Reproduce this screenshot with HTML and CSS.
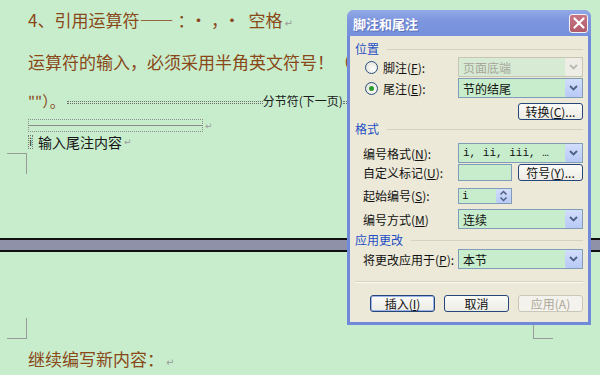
FILE: index.html
```html
<!DOCTYPE html>
<html lang="zh-CN">
<head>
  <meta charset="UTF-8" />
  <title>脚注和尾注</title>
  <link rel="stylesheet" href="styles.css">
</head>
<body>
  <div class="doc">
    <div class="sheet">
      <p class="line first">4、引用运算符——<span class="ops">：·，·</span>空格<span class="pm">↵</span></p>
      <p class="line second">运算符的输入，必须采用半角英文符号！（</p>
      <div class="line third">
        <span class="quote">""）。</span>
        <span class="dots lead"></span>
        <span class="break-label">分节符(下一页)</span>
        <span class="dots tail"></span>
      </div>
      <div class="sep-row">
        <div class="note-sep"><span></span></div>
        <span class="pm small">↵</span>
      </div>
      <p class="endnote"><span class="ref">i</span>输入尾注内容<span class="pm small">↵</span></p>
      <div class="mark mark-top"></div>
    </div>

    <div class="page-gap"></div>

    <div class="sheet">
      <div class="bottom-marks">
        <div class="mark mark-bottom"></div>
        <div class="mark mark-bottom right"></div>
      </div>
      <p class="line last">继续编写新内容：<span class="pm">↵</span></p>
    </div>
  </div>

  <div class="dialog">
    <div class="titlebar">
      <span class="title">脚注和尾注</span>
      <span class="close">
        <svg width="12" height="12" viewBox="0 0 12 12"><path d="M1.5 1.5 L10.5 10.5 M10.5 1.5 L1.5 10.5" stroke="#fff" stroke-width="2.2" stroke-linecap="round"/></svg>
      </span>
    </div>
    <div class="dlg-body">
      <div class="group g-pos">位置</div>
      <div class="row r1">
        <label class="radio"><span class="dot"></span>脚注(<u>F</u>):</label>
        <div class="combo disabled"><span>页面底端</span><span class="arrow"><svg width="9" height="6" viewBox="0 0 9 6"><path d="M1 1 L4.5 4.5 L8 1" fill="none" stroke="#b8b8b0" stroke-width="1.8"/></svg></span></div>
      </div>
      <div class="row r2">
        <label class="radio"><span class="dot on"></span>尾注(<u>E</u>):</label>
        <div class="combo"><span>节的结尾</span><span class="arrow"><svg width="9" height="6" viewBox="0 0 9 6"><path d="M1 1 L4.5 4.5 L8 1" fill="none" stroke="#4d6185" stroke-width="1.8"/></svg></span></div>
      </div>
      <div class="btn-line"><button class="btn">转换(<u>C</u>)...</button></div>

      <div class="group g-fmt">格式</div>
      <div class="row r3">
        <label class="lbl">编号格式(<u>N</u>):</label>
        <div class="combo"><span class="mono">i, ii, iii, …</span><span class="arrow"><svg width="9" height="6" viewBox="0 0 9 6"><path d="M1 1 L4.5 4.5 L8 1" fill="none" stroke="#4d6185" stroke-width="1.8"/></svg></span></div>
      </div>
      <div class="row r4">
        <label class="lbl">自定义标记(<u>U</u>):</label>
        <div class="pair">
          <div class="field"></div>
          <button class="btn">符号(<u>Y</u>)...</button>
        </div>
      </div>
      <div class="row r5">
        <label class="lbl">起始编号(<u>S</u>):</label>
        <div class="pair">
          <div class="field spin">
            <span class="mono">i</span>
            <span class="spin-btn">
              <svg width="9" height="12" viewBox="0 0 9 12"><path d="M1.5 4.5 L4.5 1.5 L7.5 4.5 M1.5 7.5 L4.5 10.5 L7.5 7.5" fill="none" stroke="#4d6185" stroke-width="1.5"/></svg>
            </span>
          </div>
        </div>
      </div>
      <div class="row r6">
        <label class="lbl">编号方式(<u>M</u>)</label>
        <div class="combo"><span>连续</span><span class="arrow"><svg width="9" height="6" viewBox="0 0 9 6"><path d="M1 1 L4.5 4.5 L8 1" fill="none" stroke="#4d6185" stroke-width="1.8"/></svg></span></div>
      </div>

      <div class="group g-apply">应用更改</div>
      <div class="row r7">
        <label class="lbl">将更改应用于(<u>P</u>):</label>
        <div class="combo"><span>本节</span><span class="arrow"><svg width="9" height="6" viewBox="0 0 9 6"><path d="M1 1 L4.5 4.5 L8 1" fill="none" stroke="#4d6185" stroke-width="1.8"/></svg></span></div>
      </div>

      <div class="divider"></div>

      <div class="actions">
        <button class="btn default">插入(<u>I</u>)</button>
        <button class="btn">取消</button>
        <button class="btn off">应用(A)</button>
      </div>
    </div>
  </div>
</body>
</html>
```

FILE: styles.css
```css
* {
  margin: 0;
  padding: 0;
  box-sizing: border-box;
}

body {
  width: 600px;
  height: 375px;
  overflow: hidden;
  background-color: #c7edcc;
  font-family: "Noto Sans CJK SC", "DejaVu Sans", sans-serif;
  position: relative;
}

/* documento */
.sheet {
  padding-left: 28px;
}

.line {
  font-size: 17px;
  line-height: 20px;
  height: 20px;
  color: #8a4818;
  white-space: nowrap;
}

.first {
  margin-top: 10px;
}

.ops {
  letter-spacing: 4px;
  margin: 0 4px;
}

.second {
  margin-top: 22px;
}

.third {
  margin-top: 19px;
  display: flex;
  align-items: center;
}

.quote {
  font-size: 15px;
}

.dots {
  height: 3px;
  border-top: 1px dotted #6e6e6e;
  border-bottom: 1px dotted #6e6e6e;
  margin-top: 2px;
}

.dots.lead {
  width: 196px;
  margin-left: 2px;
}

.dots.tail {
  width: 30px;
}

.break-label {
  font-size: 12px;
  color: #1a1a1a;
}

.pm {
  color: #9a9a9a;
  font-size: 10px;
  margin-left: 2px;
}

.pm.small {
  font-size: 9px;
}

.sep-row {
  margin-top: 8px;
  display: flex;
  align-items: center;
  height: 13px;
}

.note-sep {
  width: 175px;
  height: 13px;
  border: 1px dotted #8c8c8c;
  display: flex;
  align-items: center;
}

.note-sep span {
  display: block;
  width: 100%;
  border-top: 1px solid #8a8a8a;
}

.endnote {
  margin-top: 3px;
  font-size: 14px;
  line-height: 14px;
  height: 14px;
  color: #161616;
  display: flex;
  align-items: center;
}

.ref {
  font-size: 10px;
  border: 1px dotted #777;
  width: 5px;
  height: 14px;
  line-height: 12px;
  margin-right: 5px;
  text-align: center;
}

.mark {
  width: 20px;
  height: 21px;
  border-color: #9a9a9a;
  border-style: solid;
  border-width: 0;
}

.mark-top {
  margin-top: 4px;
  margin-left: -21px;
  border-top-width: 1px;
  border-right-width: 1px;
}

.page-gap {
  margin-top: 64px;
  height: 14px;
  background: #8f91a9;
  border-top: 2px solid #111;
  border-bottom: 2px solid #111;
}

.bottom-marks {
  margin-top: 66px;
  display: flex;
  justify-content: space-between;
  margin-left: -21px;
  width: 546px;
}

.mark-bottom {
  border-bottom-width: 1px;
  border-right-width: 1px;
}

.mark-bottom.right {
  border-right-width: 0;
  border-left-width: 1px;
}

.last {
  margin-top: 10px;
}

/* caixa de diálogo */
.dialog {
  position: absolute;
  left: 347px;
  top: 10px;
  width: 244px;
  height: 315px;
  background: #7089d8;
  border-radius: 7px 7px 0 0;
  font-size: 12px;
  color: #111;
}

.titlebar {
  height: 26px;
  display: flex;
  align-items: center;
  justify-content: space-between;
  padding: 0 3px 0 6px;
  background: linear-gradient(#93a9e8, #7d96de 40%, #7590dc);
  border-radius: 7px 7px 0 0;
}

.title {
  color: #fff;
  font-weight: bold;
  font-size: 13px;
  text-shadow: 1px 1px 0 #5a6fb8;
}

.close {
  width: 19px;
  height: 19px;
  border: 1px solid #f2f2f2;
  border-radius: 3px;
  background: linear-gradient(#c77683, #b25a6a);
  display: flex;
  align-items: center;
  justify-content: center;
}

.dlg-body {
  margin: 0 3px;
  height: 286px;
  background: #ece9d8;
  padding: 0 5px;
}

.group {
  height: 16px;
  line-height: 16px;
  color: #1f4fc4;
  display: flex;
  align-items: center;
}

.group::after {
  content: "";
  flex: 1;
  margin-left: 8px;
  border-top: 1px solid #d5d2c0;
}

.g-pos {
  transform: translateY(5px);
  margin-bottom: 5px;
}

.row {
  display: grid;
  grid-template-columns: 103px 125px;
  align-items: center;
}

.radio,
.lbl {
  display: flex;
  align-items: center;
  padding-left: 8px;
  white-space: nowrap;
}

.radio {
  padding-left: 10px;
}

u {
  text-decoration: underline;
}

.dot {
  width: 13px;
  height: 13px;
  border: 1px solid #27517f;
  border-radius: 50%;
  background: radial-gradient(circle at 60% 60%, #fff, #dcdad0);
  margin-right: 5px;
  display: flex;
  align-items: center;
  justify-content: center;
}

.dot.on::after {
  content: "";
  width: 5px;
  height: 5px;
  border-radius: 50%;
  background: #2a9b2a;
}

.r1 {
  margin-top: 3px;
}

.r2 {
  margin-top: 1px;
}

.combo {
  height: 20px;
  border: 1px solid #7f9db9;
  background: #c7edcc;
  display: flex;
  align-items: center;
  justify-content: space-between;
  padding-left: 4px;
}

.combo.disabled {
  background: #d6ead4;
  border-color: #c8c5b4;
  color: #a6a59a;
}

.arrow {
  width: 17px;
  height: 18px;
  background: linear-gradient(#d3defc, #b7c9f6);
  border-radius: 2px;
  display: flex;
  align-items: center;
  justify-content: center;
}

.combo.disabled .arrow {
  background: #efeee6;
}

.mono {
  font-family: "Liberation Mono", monospace;
  font-size: 11px;
}

.btn-line {
  display: flex;
  justify-content: flex-end;
  margin-top: 5px;
}

.btn {
  height: 17px;
  width: 65px;
  padding: 0;
  white-space: nowrap;
  font-family: inherit;
  font-size: 12px;
  color: #111;
  background: linear-gradient(#fbfbf8, #ecebe4);
  border: 1px solid #26467a;
  border-radius: 3px;
  line-height: 15px;
}

.g-fmt {
  margin-top: 1px;
}

.r3 {
  margin-top: 6px;
}

.r4 {
  margin-top: 1px;
}

.pair {
  display: flex;
  justify-content: space-between;
  align-items: center;
}

.field {
  width: 54px;
  height: 17px;
  border: 1px solid #7f9db9;
  background: #c7edcc;
}

.r5 {
  margin-top: 6px;
}

.field.spin {
  height: 16px;
  display: flex;
  align-items: center;
  justify-content: space-between;
  padding-left: 3px;
}

.spin-btn {
  width: 15px;
  height: 14px;
  background: linear-gradient(#d3defc, #b7c9f6);
  border-radius: 2px;
  display: flex;
  align-items: center;
  justify-content: center;
}

.r6 {
  margin-top: 5px;
}

.g-apply {
  margin-top: 3px;
}

.r7 {
  margin-top: 1px;
}

.divider {
  margin-top: 12px;
  border-top: 1px solid #d5d2c0;
  border-bottom: 1px solid #fbfaf5;
}

.actions {
  margin-top: 12px;
  display: flex;
  justify-content: flex-end;
  gap: 9px;
}

.btn.default {
  box-shadow: inset 0 0 0 1px #9cb3ea;
}

.btn.off {
  color: #aca899;
  border-color: #c9c7ba;
  background: #f3f2ec;
}
```
